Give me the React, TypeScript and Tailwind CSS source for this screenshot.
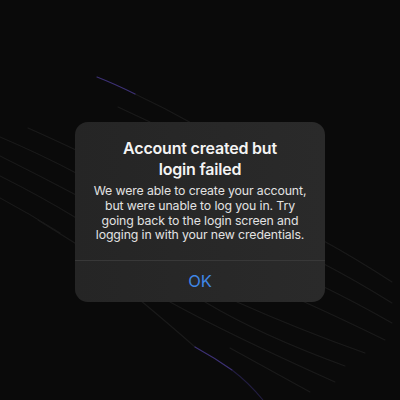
import React from "react";

function Background() {
  const gray = "#1a1a1a";
  return (
    <svg
      className="absolute inset-0"
      width={400}
      height={400}
      viewBox="0 0 400 400"
      fill="none"
    >
      <g stroke={gray} strokeWidth={1.1} strokeLinecap="round">
        <path d="M135 94 Q165 108 195 125" />
        <path d="M118 107 L150 122" />
        <path d="M28 128 Q55 140 78 151" />
        <path d="M0 137 Q40 154 78 174" />
        <path d="M0 156 Q40 176 78 196" />
        <path d="M0 176 Q40 196 78 219" />
        <path d="M0 198 Q30 214 60 233" />
        <path d="M38 220 L78 245" />
        <path d="M322 240 Q355 258 392 282" />
        <path d="M322 263 Q355 280 392 303" />
        <path d="M322 286 Q355 302 392 323" />
        <path d="M300 300 Q340 318 385 340" />
        <path d="M140 300 Q170 325 195 347" />
        <path d="M170 302 Q230 335 335 382" />
        <path d="M205 302 Q260 335 345 366" />
        <path d="M237 302 Q300 330 365 353" />
        <path d="M230 348 Q270 370 310 392" />
      </g>
      <g stroke="#3d3175" strokeWidth={1.2} strokeLinecap="round">
        <path d="M97 77 Q115 84 135 94" />
        <path d="M195 347 Q215 358 232 370" />
      </g>
      <path d="M232 370 Q248 382 263 400" stroke="#221d40" strokeWidth={1.1} />
    </svg>
  );
}

export default function App() {
  return (
    <div
      className="relative w-[400px] h-[400px] bg-[#0a0a0a] overflow-hidden"
      style={{ fontFamily: "Inter, 'Noto Sans', sans-serif" }}
    >
      <Background />
      <div className="relative pt-[122px] flex justify-center">
        <div className="w-[250px] h-[180px] rounded-[13px] bg-gradient-to-r from-[#252525] to-[#2a2a2a] flex flex-col overflow-hidden">
          <div className="flex-1 flex flex-col items-center pt-[16px] text-center whitespace-nowrap">
            <div className="text-[16px] leading-[20.5px] font-semibold text-[#f4f4f4] tracking-[-0.2px]">
              Account created but
              <br />
              login failed
            </div>
            <div className="mt-[5px] text-[12.3px] leading-[14.8px] text-[#e2e2e2] tracking-[-0.12px]">
              We were able to create your account,
              <br />
              but were unable to log you in. Try
              <br />
              going back to the login screen and
              <br />
              logging in with your new credentials.
            </div>
          </div>
          <div className="h-px bg-[#383838]" />
          <div className="h-[41px] flex items-center justify-center text-[16.5px] text-[#3f86e6]">
            OK
          </div>
        </div>
      </div>
    </div>
  );
}
